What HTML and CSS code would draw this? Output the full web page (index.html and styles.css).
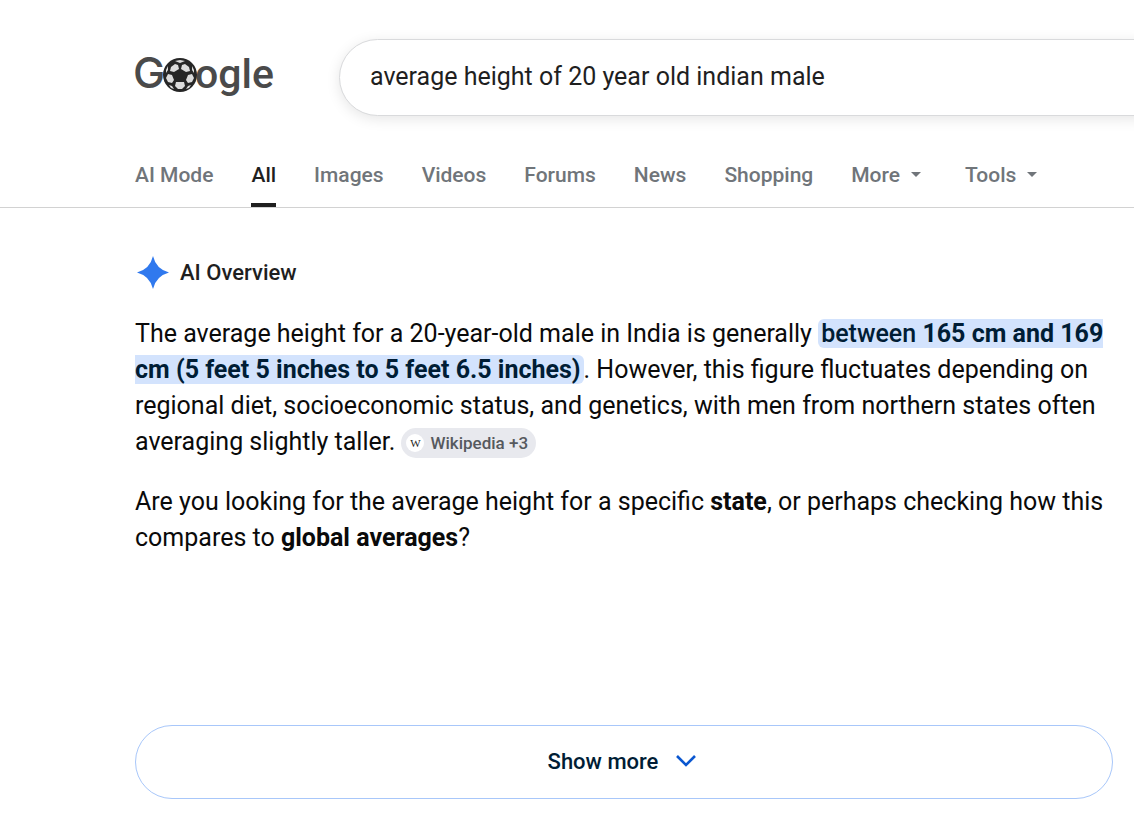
FILE: index.html
```html
<!DOCTYPE html>
<html lang="en">
<head>
  <meta charset="UTF-8">
  <meta name="viewport" content="width=device-width, initial-scale=1.0">
  <title>average height of 20 year old indian male - Google Search</title>
  <link rel="stylesheet" href="styles.css">
</head>
<body>
  <header class="header">
    <a class="logo" href="#" aria-label="Google">
      <svg width="144" height="60" viewBox="0 0 144 60">
        <text class="logo-g" x="1" y="40">G</text>
        <text class="logo-ogle" x="63" y="40">ogle</text>
        <g transform="translate(48 27)">
          <circle r="17" fill="#262626"/>
          <g fill="#dcdcdc">
            <path d="M-2 -10L-1 -6L-6 -3L-10 -4L-9 -8L-5 -11Z"/>
            <path d="M2 -10L1 -6L6 -3L10 -4L9 -8L5 -11Z"/>
            <path d="M-12 -1L-8 0L-6 5L-8 8L-12 7L-14 3Z"/>
            <path d="M12 -1L8 0L6 5L8 8L12 7L14 3Z"/>
            <path d="M-4 7H4L5 11L2 14H-2L-5 11Z"/>
            <path d="M-5 -14L0 -15L5 -14L0 -12Z"/>
            <path d="M-14 -5L-12 -9L-12 -5L-14 -2ZM14 -5L12 -9L12 -5L14 -2Z"/>
            <path d="M-11 10L-8 11L-6 14L-9 13ZM11 10L8 11L6 14L9 13Z"/>
          </g>
        </g>
      </svg>
    </a>
    <form class="search" role="search">
      <input class="search-input" type="text" name="q" aria-label="Search" value="average height of 20 year old indian male">
    </form>
  </header>

  <nav class="tabs">
    <a class="tab" href="#">AI Mode</a>
    <a class="tab active" href="#">All</a>
    <a class="tab" href="#">Images</a>
    <a class="tab" href="#">Videos</a>
    <a class="tab" href="#">Forums</a>
    <a class="tab" href="#">News</a>
    <a class="tab" href="#">Shopping</a>
    <button class="tab" type="button">More <span class="caret"></span></button>
    <button class="tab tools" type="button">Tools <span class="caret"></span></button>
  </nav>

  <main class="overview">
    <h1 class="overview-title">
      <svg width="34" height="34" viewBox="0 0 34 34">
        <path fill="#3079ee" d="M18 1Q21 14 34 17.500Q21 21 18 34Q15 21 2 17.500Q15 14 18 1Z"/>
      </svg>
      AI Overview
    </h1>
    <p class="answer">The average height for a 20-year-old male in India is generally <mark class="highlight">between <b>165 cm and 169 cm (5 feet 5 inches to 5 feet 6.5 inches)</b></mark>. However, this figure fluctuates depending on regional diet, socioeconomic status, and genetics, with men from northern states often averaging slightly taller. <button class="source" type="button"><span class="source-icon">W</span>Wikipedia +3</button></p>
    <p class="answer">Are you looking for the average height for a specific <b>state</b>, or perhaps checking how this compares to <b>global averages</b>?</p>
    <button class="show-more" type="button">
      Show more
      <svg width="20" height="12" viewBox="0 0 20 12">
        <path fill="none" stroke="#0b57d0" stroke-width="2.600" d="M1 1L10 10L19 1"/>
      </svg>
    </button>
  </main>
</body>
</html>
```
FILE: styles.css
```css
* {
  box-sizing: border-box;
}

body {
  margin: 0;
  overflow-x: hidden;
  background: #fff;
  color: #0a0a0a;
  font-family: Roboto, "Open Sans", sans-serif;
}

button {
  font-family: inherit;
  cursor: pointer;
}

.header {
  display: flex;
  align-items: center;
  gap: 63px;
  padding: 39px 0 0 132px;
}

.logo {
  display: flex;
}

.logo text {
  fill: #4a4a4a;
  font-weight: 500;
}

.logo-g {
  font-family: Inter, sans-serif;
  font-size: 43px;
}

.logo-ogle {
  font-size: 41px;
}

.search {
  flex: 1;
  margin-right: -40px;
}

.search-input {
  display: block;
  width: 100%;
  height: 77px;
  padding: 0 30px 2px;
  border: 1px solid #d9dadc;
  border-radius: 39px;
  outline: none;
  box-shadow: 0 3px 14px rgba(0, 0, 0, 0.1);
  color: #1f1f1f;
  font: 25px Roboto, "Open Sans", sans-serif;
}

.tabs {
  display: flex;
  gap: 38px;
  margin-top: 32px;
  padding-left: 135px;
  border-bottom: 1px solid #d2d2d2;
}

.tab {
  display: flex;
  align-items: center;
  height: 59px;
  padding: 0 0 2px;
  border: 0;
  border-bottom: 4px solid transparent;
  background: none;
  color: #70757a;
  font-size: 21px;
  font-weight: 500;
  text-decoration: none;
  white-space: nowrap;
}

.tab.active {
  border-color: #1f1f1f;
  color: #1f1f1f;
}

.tools {
  margin-left: 6px;
}

.caret {
  margin-left: 11px;
  border: 5px solid transparent;
  border-top-color: #70757a;
  border-bottom: 0;
}

.overview {
  padding: 47px 21px 24px 135px;
}

.overview-title {
  display: flex;
  align-items: center;
  gap: 11px;
  margin: 0 0 27px;
  color: #1f1f1f;
  font-size: 22px;
  font-weight: 500;
}

.answer {
  margin: 0 0 24px;
  font-size: 25px;
  line-height: 36px;
}

.answer b {
  font-weight: 700;
}

.highlight {
  padding: 0 3px;
  border-radius: 6px;
  background: #d3e3fd;
  color: #001d35;
  font-weight: 500;
}

.source {
  display: inline-flex;
  align-items: center;
  gap: 6px;
  height: 30px;
  padding: 0 8px 0 5px;
  border: 0;
  border-radius: 15px;
  background: #e8e9ee;
  color: #56595e;
  font-size: 17px;
  font-weight: 500;
  line-height: 20px;
  vertical-align: middle;
}

.source-icon {
  width: 18px;
  border-radius: 50%;
  background: #fff;
  color: #222;
  font: 11px/18px "Liberation Serif", serif;
}

.show-more {
  display: flex;
  align-items: center;
  justify-content: center;
  gap: 18px;
  width: 100%;
  height: 74px;
  margin-top: 169px;
  padding-right: 10px;
  padding-bottom: 3px;
  border: 1px solid #a8c7fa;
  border-radius: 37px;
  background: #fff;
  color: #001d35;
  font-size: 22px;
  font-weight: 500;
}
```
